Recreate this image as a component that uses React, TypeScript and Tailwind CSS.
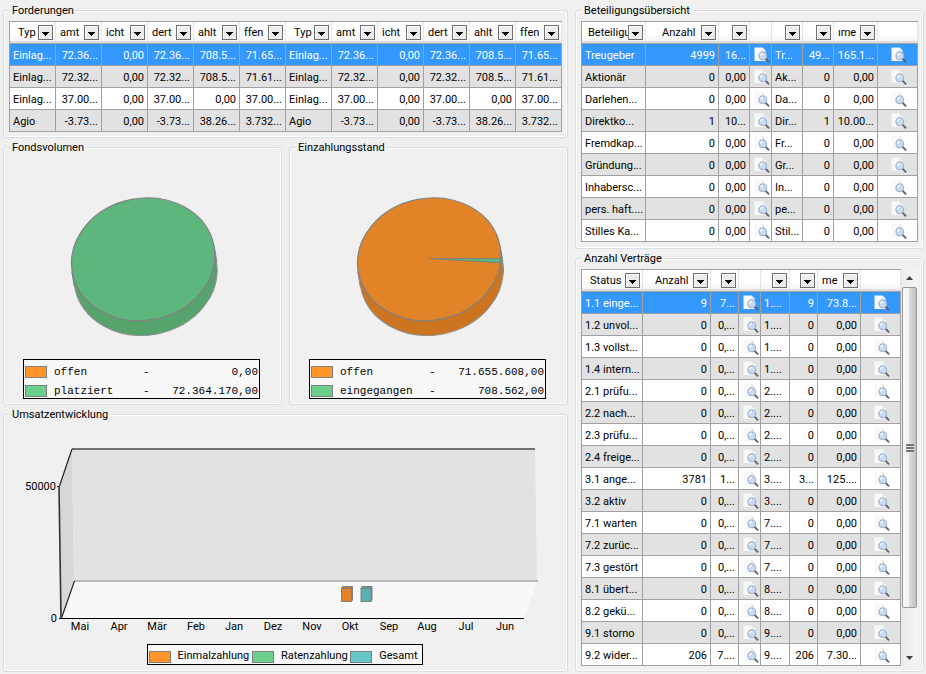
import type { ReactNode } from "react";

type Align = "l" | "r";

type Column = {
  label?: string;
  pad?: string;
  width?: string;
  align?: Align;
  kind?: "text" | "icon";
};

function Group({ title, children }: { title: string; children: ReactNode }) {
  return (
    <fieldset className="min-w-0 rounded-[3px] border border-[#d5dfe5] shadow-[inset_0_0_0_1px_#ffffff]">
      <legend className="ml-1.5 h-[13px] bg-[#f0f0f0] px-0.5 leading-[13px]">{title}</legend>
      {children}
    </fieldset>
  );
}

function FilterButton({ label }: { label: string }) {
  return (
    <button
      type="button"
      aria-label={label}
      className="flex h-[15px] w-[15px] shrink-0 items-center justify-center border border-[#6e6e6e] bg-[#ececec] pt-0.5 shadow-[inset_1px_1px_0_#ffffff]"
    >
      <svg width="7" height="4" viewBox="0 0 7 4" shapeRendering="crispEdges" aria-hidden="true">
        <path d="M0 0H7V1H6V2H5V3H4V4H3V3H2V2H1V1H0Z" fill="#000" />
      </svg>
    </button>
  );
}

function DetailIcon({ selected }: { selected: boolean }) {
  return (
    <svg width="16" height="16" viewBox="0 0 16 16" aria-hidden="true">
      <path d="M0.5 0.5H8.5L11.5 3.5V14H0.5Z" fill={selected ? "#f6f9fd" : "#f8f8f8"} />
      <path d="M8.5 0.5V3.5H11.5Z" fill="#e1e5ea" />
      <path d="M11.8 12L14.6 14.8" stroke="#5f6166" strokeWidth="1.8" strokeLinecap="round" />
      <circle cx="8.8" cy="8.8" r="3.9" fill="#c9dbf3" stroke="#9fb0ca" strokeWidth="1.1" />
      <path d="M6.6 8.6A2.4 2.4 0 0 1 9 6.4" stroke="#f6faff" strokeWidth="1.3" fill="none" />
    </svg>
  );
}

function Grid({ columns, rows, name }: { columns: Column[]; rows: string[][]; name: string }) {
  return (
    <table
      aria-label={name}
      className="w-full table-fixed border-separate border-spacing-0 border-l border-t border-[#a0a0a0]"
    >
      <colgroup>
        {columns.map((c, i) => (
          <col key={i} className={c.width} />
        ))}
      </colgroup>
      <thead>
        <tr>
          {columns.map((c, i) => (
            <th
              key={i}
              scope="col"
              className="h-[22px] border-b border-[#a0a0a0] bg-linear-to-b from-white from-50% to-[#f1f2f4] p-0 font-normal"
            >
              <div className="flex h-[21px] items-center border-b-2 border-r border-b-[#e0e0e0] border-r-[#e3e4e6] pr-0.5 pt-0.5">
                <span className={`min-w-0 flex-1 overflow-hidden whitespace-nowrap text-left leading-4 ${c.pad ?? ""}`}>
                  {c.label}
                </span>
                {c.kind !== "icon" && <FilterButton label={`Filter ${c.label ?? i + 1}`} />}
              </div>
            </th>
          ))}
        </tr>
      </thead>
      <tbody>
        {rows.map((row, r) => {
          const tone = r === 0 ? "bg-[#3399ff] text-white" : r % 2 === 1 ? "bg-[#e2e2e2]" : "bg-white";
          return (
            <tr key={r} className={tone}>
              {columns.map((c, i) => (
                <td
                  key={i}
                  className={`h-[22px] overflow-hidden whitespace-nowrap border-b border-r border-[#a0a0a0] leading-4 ${
                    c.kind === "icon"
                      ? "py-0 pl-0.5 pr-0"
                      : c.align === "r"
                        ? "pb-0 pl-0 pr-[3px] pt-0.5 text-right"
                        : "pb-0 pl-[3px] pr-0 pt-0.5"
                  }`}
                >
                  {c.kind === "icon" ? (
                    <button type="button" aria-label={`Details ${row[0]}`} className="mx-auto block">
                      <DetailIcon selected={r === 0} />
                    </button>
                  ) : (
                    row[i]
                  )}
                </td>
              ))}
            </tr>
          );
        })}
      </tbody>
    </table>
  );
}

const claimHalf: Column[] = [
  { label: "Typ", pad: "pl-2" },
  { label: "amt", pad: "pl-1", align: "r" },
  { label: "icht", pad: "pl-1", align: "r" },
  { label: "dert", pad: "pl-1", align: "r" },
  { label: "ahlt", pad: "pl-1", align: "r" },
  { label: "ffen", pad: "pl-1", align: "r" },
];
const claimColumns = [...claimHalf, ...claimHalf];

const claimRows = [
  ["Einlag...", "72.36...", "0,00", "72.36...", "708.5...", "71.65..."],
  ["Einlag...", "72.32...", "0,00", "72.32...", "708.5...", "71.61..."],
  ["Einlag...", "37.00...", "0,00", "37.00...", "0,00", "37.00..."],
  ["Agio", "-3.73...", "0,00", "-3.73...", "38.26...", "3.732..."],
].map((r) => [...r, ...r]);

const shareColumns: Column[] = [
  { label: "Beteiligu", pad: "pl-1.5", width: "w-[64px]" },
  { label: "Anzahl", pad: "pl-4", width: "w-[73px]", align: "r" },
  { width: "w-[31px]", align: "r" },
  { width: "w-[22px]", kind: "icon" },
  { width: "w-[31px]" },
  { width: "w-[31px]", align: "r" },
  { label: "ıme", pad: "pl-1", width: "w-[44px]", align: "r" },
  { width: "w-[40px]", kind: "icon" },
];

const shareRows = [
  ["Treugeber", "4999", "16...", "", "Tr...", "49...", "165.1..."],
  ["Aktionär", "0", "0,00", "", "Ak...", "0", "0,00"],
  ["Darlehen...", "0", "0,00", "", "Da...", "0", "0,00"],
  ["Direktko...", "1", "10...", "", "Dir...", "1", "10.00..."],
  ["Fremdkap...", "0", "0,00", "", "Fr...", "0", "0,00"],
  ["Gründung...", "0", "0,00", "", "Gr...", "0", "0,00"],
  ["Inhabersc...", "0", "0,00", "", "In...", "0", "0,00"],
  ["pers. haft....", "0", "0,00", "", "pe...", "0", "0,00"],
  ["Stilles Ka...", "0", "0,00", "", "Stil...", "0", "0,00"],
];

const contractColumns: Column[] = [
  { label: "Status", pad: "pl-2", width: "w-[61px]" },
  { label: "Anzahl", pad: "pl-3", width: "w-[68px]", align: "r" },
  { width: "w-[28px]", align: "r" },
  { width: "w-[22px]", kind: "icon" },
  { width: "w-[29px]" },
  { width: "w-[28px]", align: "r" },
  { label: "me", pad: "pl-1", width: "w-[43px]", align: "r" },
  { width: "w-[40px]", kind: "icon" },
];

const contractRows = [
  ["1.1 einge...", "9", "7...", "", "1....", "9", "73.8..."],
  ["1.2 unvol...", "0", "0,...", "", "1....", "0", "0,00"],
  ["1.3 vollst...", "0", "0,...", "", "1....", "0", "0,00"],
  ["1.4 intern...", "0", "0,...", "", "1....", "0", "0,00"],
  ["2.1 prüfu...", "0", "0,...", "", "2....", "0", "0,00"],
  ["2.2 nach...", "0", "0,...", "", "2....", "0", "0,00"],
  ["2.3 prüfu...", "0", "0,...", "", "2....", "0", "0,00"],
  ["2.4 freige...", "0", "0,...", "", "2....", "0", "0,00"],
  ["3.1 ange...", "3781", "1...", "", "3....", "3...", "125...."],
  ["3.2 aktiv", "0", "0,...", "", "3....", "0", "0,00"],
  ["7.1 warten", "0", "0,...", "", "7....", "0", "0,00"],
  ["7.2 zurüc...", "0", "0,...", "", "7....", "0", "0,00"],
  ["7.3 gestört", "0", "0,...", "", "7....", "0", "0,00"],
  ["8.1 übert...", "0", "0,...", "", "8....", "0", "0,00"],
  ["8.2 gekü...", "0", "0,...", "", "8....", "0", "0,00"],
  ["9.1 storno", "0", "0,...", "", "9....", "0", "0,00"],
  ["9.2 wider...", "206", "7....", "", "9....", "206", "7.30..."],
];

function Pie({ face, side, slice = false }: { face: string; side: string; slice?: boolean }) {
  return (
    <svg width="278" height="205" viewBox="4 154 278 205" aria-hidden="true">
      <g stroke="#8c8c8c" strokeWidth="1">
        <ellipse cx="145.5" cy="274" rx="72" ry="61" transform="rotate(-10.9 145.5 274)" fill={side} />
        <path d="M214.3 246.6L216.8 261.6L74.2 286.4L71.7 271.4Z" fill={side} stroke="none" />
        <path d="M214.3 246.6L216.8 261.6M74.2 286.4L71.7 271.4" fill="none" />
        {slice && <path d="M215.2 259L217.6 274.5L217.4 267L215.4 254Z" fill="#56a46c" strokeWidth="0.6" />}
        <ellipse
          cx="143.2"
          cy="259.3"
          rx="72"
          ry="61"
          transform="rotate(-10.9 143.2 259.3)"
          fill={face}
          stroke="#808080"
          strokeWidth="1.2"
        />
        {slice && <path d="M143 258.5L215 258.5L214.6 262.8Z" fill="#5db67b" stroke="#808080" />}
      </g>
    </svg>
  );
}

function Swatch({ color }: { color: string }) {
  return <span className={`h-3 w-[22px] shrink-0 border border-[#808080] ${color}`} />;
}

function PieLegend({ rows }: { rows: { color: string; name: string; value: string }[] }) {
  return (
    <ul className="mr-0.5 w-[237px] border border-black bg-[#f8f8f8] font-['Liberation_Mono',monospace]">
      {rows.map((r) => (
        <li key={r.name} className="flex h-[19px] items-end px-px pb-px leading-3">
          <Swatch color={r.color} />
          <span className="ml-[7px] w-[89px]">{r.name}</span>
          <span>-</span>
          <span className="flex-1 text-right">{r.value}</span>
        </li>
      ))}
    </ul>
  );
}

const months = ["Mai", "Apr", "Mär", "Feb", "Jan", "Dez", "Nov", "Okt", "Sep", "Aug", "Jul", "Jun"];

function SalesChart() {
  return (
    <svg
      width="560"
      height="219"
      viewBox="6 421 560 219"
      role="img"
      aria-label="Umsatzentwicklung"
      className="max-w-full"
    >
      <path d="M59.5 486L72 449L74 581L61 618Z" fill="#d7d7d7" />
      <path d="M72 449H535L537 581H74Z" fill="#e2e2e2" />
      <path d="M61 618L74 581H537.5L524 618Z" fill="#f8f8f8" />
      <path d="M72 449H535" stroke="#707070" strokeWidth="2" />
      <path d="M74 581H538" stroke="#a6a6a6" strokeWidth="1.5" />
      <path d="M59.5 486L72 449M61.5 618L74.5 581" stroke="#222" strokeWidth="1.2" />
      <path d="M59 486L61 618" stroke="#333" strokeWidth="1.6" />
      <path d="M57 486.5H59M59 618.5H524" stroke="#000" strokeWidth="1" />
      <g stroke="#808080" strokeWidth="1">
        <path d="M341.5 588.5L342.5 586.5H352.5V600L351.5 601.5Z" fill="#cc7420" />
        <rect x="341.5" y="588.5" width="10" height="13" fill="#e28327" />
        <path d="M361 588.5L362 586.5H372V600L371 601.5Z" fill="#4f9fa0" />
        <rect x="361" y="588.5" width="10" height="13" fill="#58b0b2" />
      </g>
      <g fill="#000">
        <text x="56" y="490" textAnchor="end">
          50000
        </text>
        <text x="57" y="622" textAnchor="end">
          0
        </text>
        {months.map((m, i) => (
          <text key={m} x={80 + Math.round(i * 38.6)} y="630" textAnchor="middle">
            {m}
          </text>
        ))}
      </g>
    </svg>
  );
}

function Arrow({ up = false }: { up?: boolean }) {
  return (
    <svg width="7" height="4" viewBox="0 0 7 4" aria-hidden="true">
      <path d={up ? "M3.5 0L7 4H0Z" : "M0 0H7L3.5 4Z"} fill="#404040" />
    </svg>
  );
}

function Scrollbar() {
  return (
    <div className="flex w-[17px] shrink-0 flex-col items-stretch bg-linear-to-r from-[#e9e9e9] via-[#f1f1f1] to-[#f4f4f4]">
      <button type="button" aria-label="Nach oben" className="flex h-[18px] items-center justify-center">
        <Arrow up />
      </button>
      <div className="flex flex-1 flex-col pb-[41px]">
        <div className="mx-px flex flex-1 flex-col items-center justify-center gap-px rounded-[2px] border border-[#979797] bg-linear-to-r from-[#f5f5f5] from-40% via-[#dcdcde] via-50% to-[#c0c0c4]">
          <span className="h-0.5 w-2 bg-[#777]" />
          <span className="h-0.5 w-2 bg-[#777]" />
          <span className="h-0.5 w-2 bg-[#777]" />
        </div>
      </div>
      <button type="button" aria-label="Nach unten" className="flex h-[17px] items-center justify-center">
        <Arrow />
      </button>
    </div>
  );
}

export default function App() {
  return (
    <main className="grid min-h-screen grid-cols-[565fr_349fr] items-start gap-x-[7px] bg-[#f0f0f0] pb-0.5 pl-[3px] pr-0.5 pt-1 font-[Roboto,'Liberation_Sans',Arial,sans-serif] text-[11px] text-black">
      <div className="grid gap-[3px]">
        <Group title="Forderungen">
          <div className="px-[5px] pb-[5px] pt-1">
            <Grid name="Forderungen" columns={claimColumns} rows={claimRows} />
          </div>
        </Group>
        <div className="grid grid-cols-2 gap-[7px]">
          <Group title="Fondsvolumen">
            <div className="flex flex-col items-center pb-[5px]">
              <Pie face="#5db67b" side="#56a46c" />
              <PieLegend
                rows={[
                  { color: "bg-[#ff942b]", name: "offen", value: "0,00" },
                  { color: "bg-[#6bd08c]", name: "platziert", value: "72.364.170,00" },
                ]}
              />
            </div>
          </Group>
          <Group title="Einzahlungsstand">
            <div className="flex flex-col items-center pb-[5px]">
              <Pie face="#e28327" side="#cc7420" slice />
              <PieLegend
                rows={[
                  { color: "bg-[#ff942b]", name: "offen", value: "71.655.608,00" },
                  { color: "bg-[#6bd08c]", name: "eingegangen", value: "708.562,00" },
                ]}
              />
            </div>
          </Group>
        </div>
        <Group title="Umsatzentwicklung">
          <div className="flex flex-col items-center gap-1 pb-1.5">
            <SalesChart />
            <ul className="mr-0.5 flex h-[21px] w-[276px] items-center justify-between border border-black bg-[#f8f8f8] pl-px pr-1 pt-1">
              <li className="flex items-center gap-[7px]">
                <Swatch color="bg-[#ff942b]" />
                Einmalzahlung
              </li>
              <li className="flex items-center gap-[7px]">
                <Swatch color="bg-[#6bd08c]" />
                Ratenzahlung
              </li>
              <li className="flex items-center gap-[7px]">
                <Swatch color="bg-[#64c6c8]" />
                Gesamt
              </li>
            </ul>
          </div>
        </Group>
      </div>
      <div className="grid gap-[3px]">
        <Group title="Beteiligungsübersicht">
          <div className="px-[5px] pb-1.5 pt-1">
            <Grid name="Beteiligungsübersicht" columns={shareColumns} rows={shareRows} />
          </div>
        </Group>
        <Group title="Anzahl Verträge">
          <div className="flex px-[5px] pb-[5px] pt-1">
            <div className="min-w-0 flex-1">
              <Grid name="Anzahl Verträge" columns={contractColumns} rows={contractRows} />
            </div>
            <Scrollbar />
          </div>
        </Group>
      </div>
    </main>
  );
}
